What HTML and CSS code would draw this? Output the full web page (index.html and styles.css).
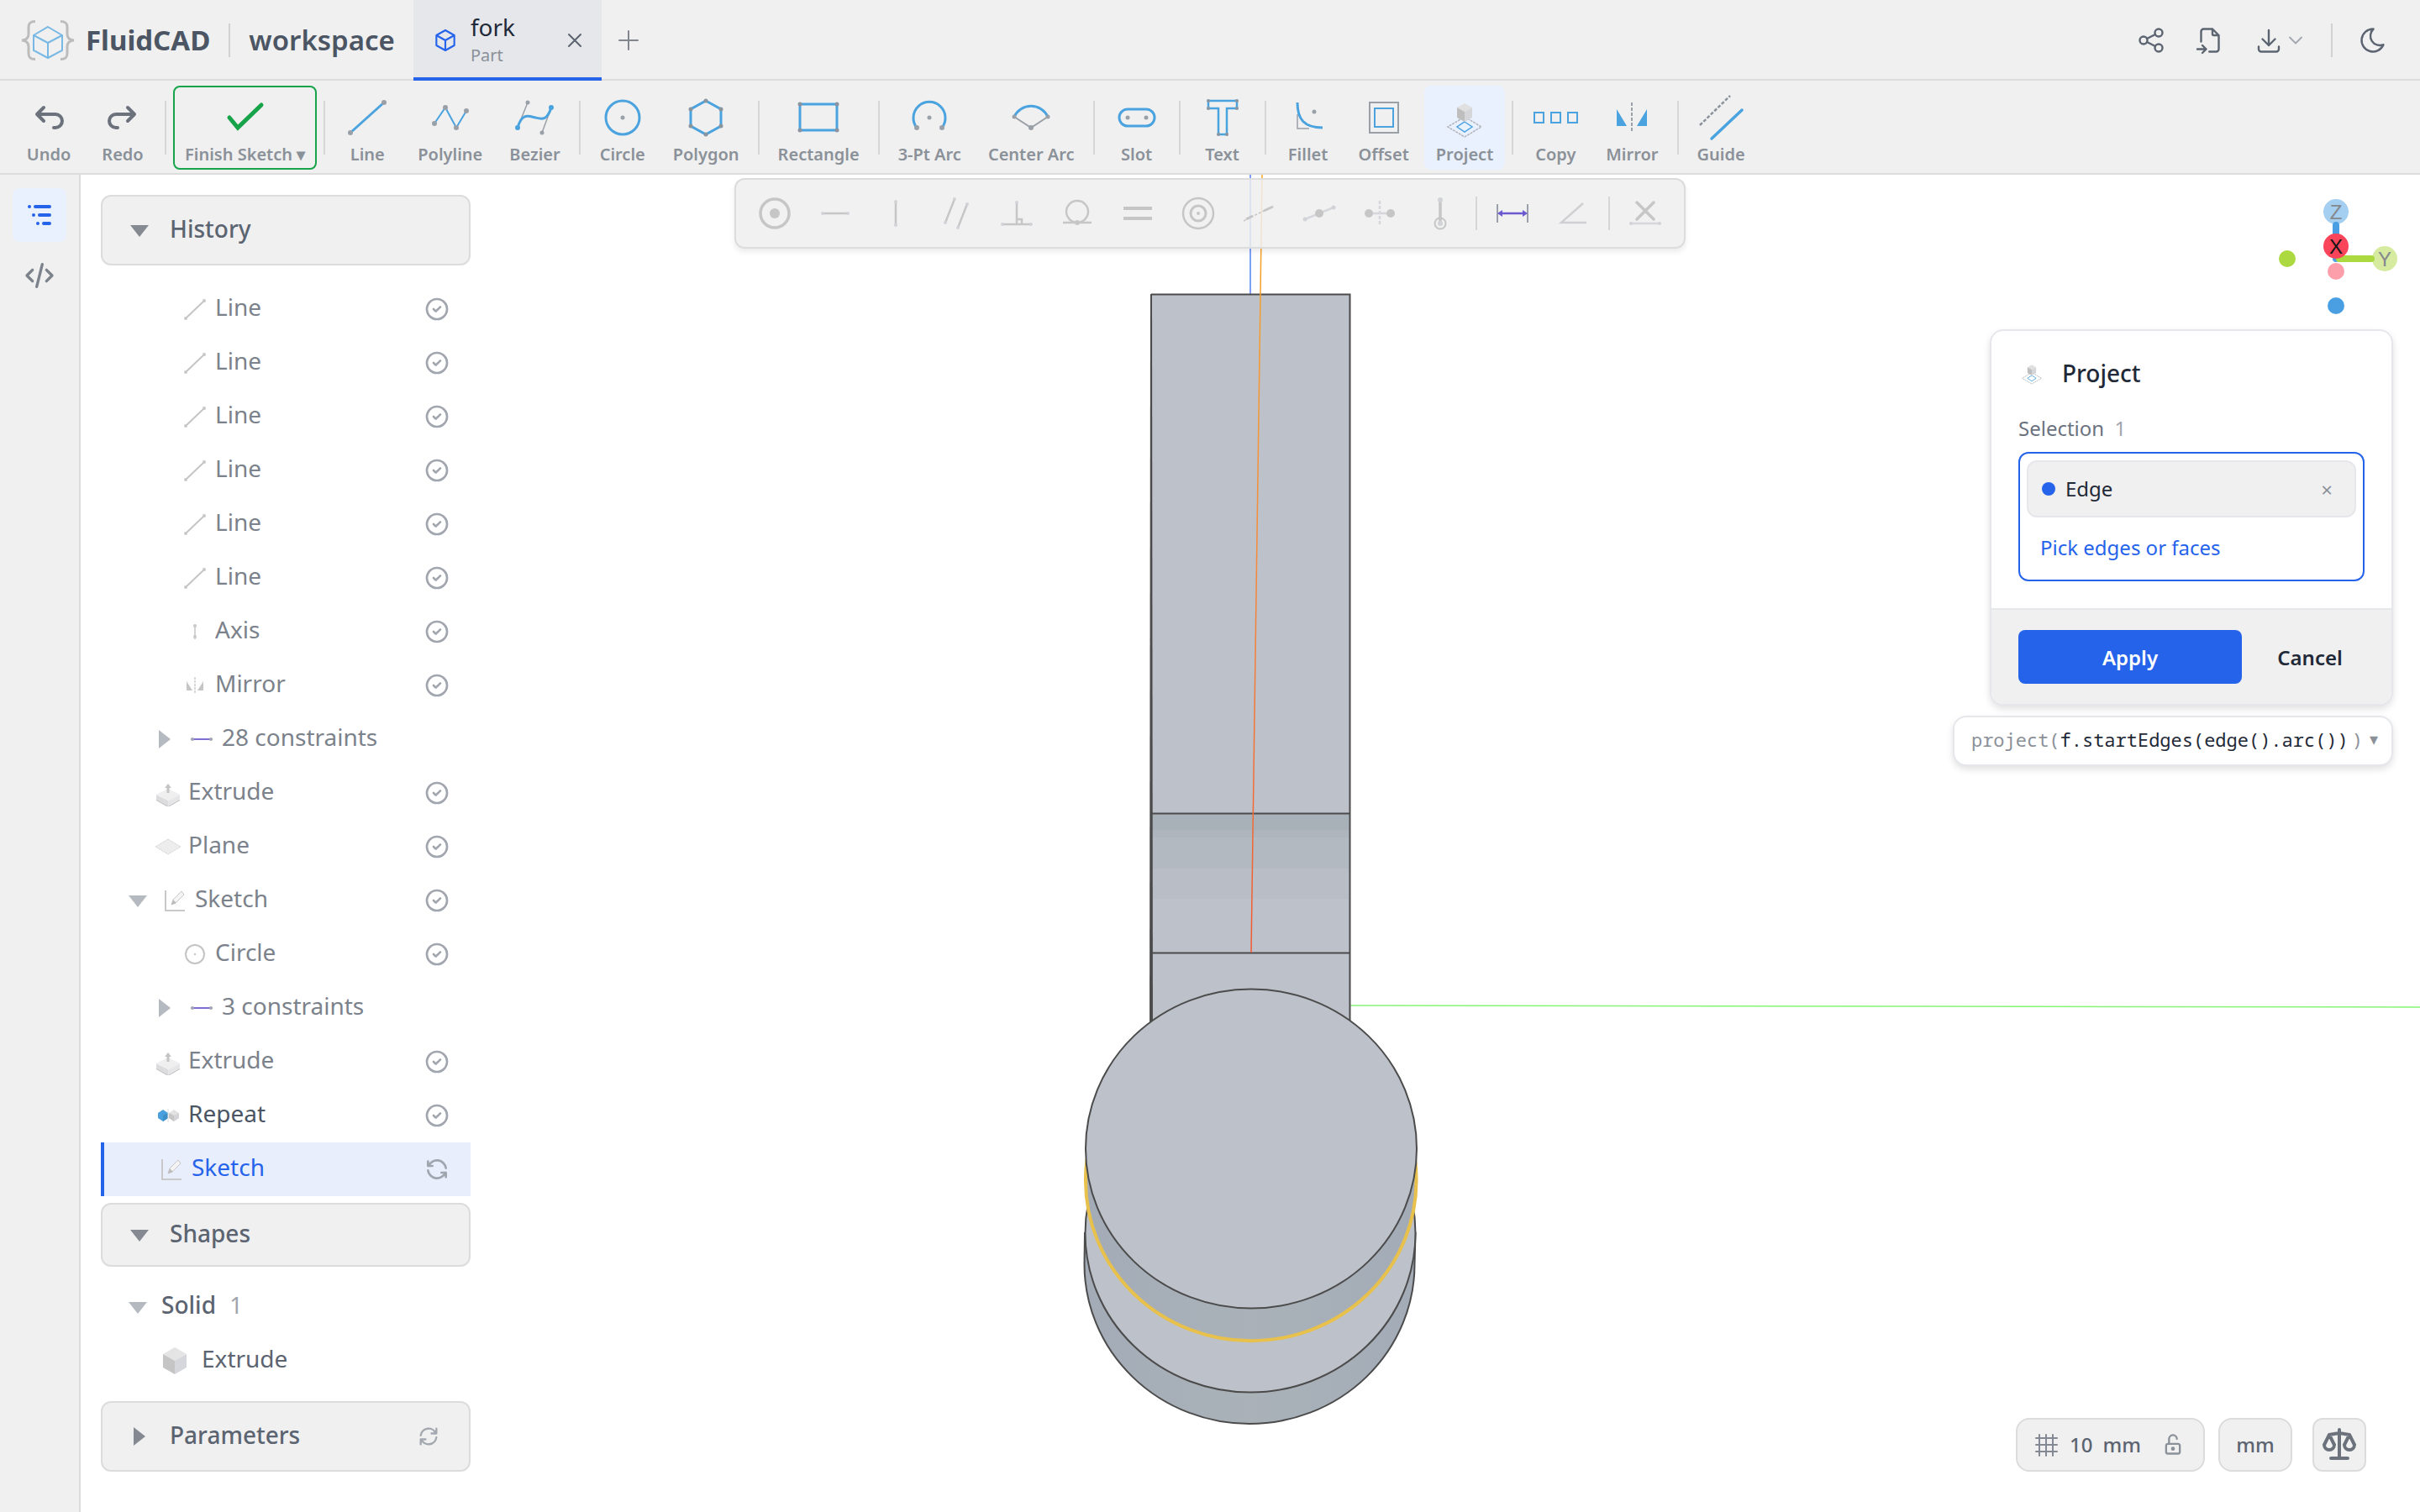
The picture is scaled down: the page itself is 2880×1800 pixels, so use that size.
FILE: index.html
```html
<!DOCTYPE html>
<html lang="en">
<head>
<meta charset="utf-8">
<title>FluidCAD – fork</title>
<link rel="stylesheet" href="styles.css">
</head>
<body>
<svg class="defs" aria-hidden="true">
  <symbol id="i-cube" viewBox="0 0 24 24"><path d="M12 3l8 4.5v9l-8 4.5-8-4.5v-9zM12 12l8-4.5M12 12v9M12 12L4 7.5"/></symbol>
  <symbol id="i-check" viewBox="0 0 24 24"><circle cx="12" cy="12" r="9"/><path d="M9 12l2 2 4-4"/></symbol>
  <symbol id="i-sync" viewBox="0 0 24 24"><path d="M20 11a8.1 8.1 0 0 0-15.5-2m-.5-4v4h4M4 13a8.1 8.1 0 0 0 15.5 2m.5 4v-4h-4"/></symbol>
  <symbol id="r-line" viewBox="0 0 32 32"><path d="M5 27L27 6" stroke="#c4c4c4" stroke-width="2"/><circle cx="5" cy="27" r="2" fill="#c8c8c8"/><circle cx="27" cy="6" r="2" fill="#c8c8c8"/></symbol>
  <symbol id="r-axis" viewBox="0 0 32 32"><path d="M16 7v18" stroke="#d4d4d8" stroke-width="2"/><circle cx="16" cy="9" r="2" fill="#c8c8c8"/><circle cx="16" cy="22" r="2" fill="#c8c8c8"/></symbol>
  <symbol id="r-mirror" viewBox="0 0 32 32"><path d="M6 11v11h7zM26 11v11h-7z" fill="#c6c6c6"/><path d="M16 6v20" stroke="#d8d8d8" stroke-width="2" stroke-dasharray="3 1"/></symbol>
  <symbol id="r-con" viewBox="0 0 32 32"><path d="M5 16h22" stroke="#7b6ed6" stroke-width="2"/><circle cx="5" cy="16" r="2" fill="#a0a4ae"/><circle cx="27" cy="16" r="2" fill="#a0a4ae"/></symbol>
  <symbol id="r-extrude" viewBox="0 0 32 32"><path d="M2 23l14 8 14-8v2l-14 8-14-8z" fill="#bdbdbd"/><path d="M2 18l14 7v7L2 24z" fill="#dcdcde"/><path d="M30 18l-14 7v7l14-8z" fill="#e6e6e8"/><path d="M16 11l14 7-14 7-14-7z" fill="#efefef"/><path d="M16 16v-8" stroke="#c4c4c4" stroke-width="3"/><path d="M16 5l4 5h-8z" fill="#c4c4c4"/></symbol>
  <symbol id="r-plane" viewBox="0 0 32 32"><path d="M1 16l15-9 15 9-15 9z" fill="#ededed" stroke="#d2d2d2" stroke-dasharray="2 1"/></symbol>
  <symbol id="r-sketch" viewBox="0 0 32 32"><path d="M5 4v24h23" fill="none" stroke="#c9c9cc" stroke-width="2"/><path d="M12 21l2-6 10-10 3 4-10 10z" fill="#f4f4f4" stroke="#c6c6c6"/><path d="M12 21l2-6 4 4z" fill="#bdbdbd"/></symbol>
  <symbol id="r-circle" viewBox="0 0 32 32"><circle cx="16" cy="16" r="11" fill="none" stroke="#c4c4c4" stroke-width="2"/><circle cx="16" cy="16" r="1" fill="#b0b0b0"/></symbol>
  <symbol id="r-repeat" viewBox="0 0 32 32"><path d="M4 13l6-4 6 4v6l-6 4-6-4z" fill="#4aa0dc"/><path d="M10 16l6-3v6l-6 4z" fill="#3d8fc8"/><path d="M17 13l6-4 6 4v6l-6 4-6-4z" fill="#e2e2e2"/><path d="M17 13l6 3v7l-6-4z" fill="#c6c6c6"/><path d="M23 16l6-3v6l-6 4z" fill="#d4d5d9"/><path d="M16 8v16" stroke="#dcdcdc"/></symbol>
  <symbol id="r-solid" viewBox="0 0 32 32"><path d="M16 0l14 8-14 8L2 8z" fill="#e4e4e4"/><path d="M2 8l14 8v16L2 24z" fill="#c5c5c5"/><path d="M30 8l-14 8v16l14-8z" fill="#d5d7dc"/></symbol>
  <symbol id="i-project" viewBox="0 0 56 56"><path d="M28 27l20 12-20 12L8 39z" fill="none" stroke="#b0b4ba" stroke-width="1.500" stroke-dasharray="3 1"/><path d="M28 33l9 6-9 6-9-6z" fill="none" stroke="#4aa3df" stroke-width="1.500"/><path d="M28 11l9 5-9 5-9-5z" fill="#e0e0e0"/><path d="M19 16l9 5v12l-9-5z" fill="#bebebe"/><path d="M37 16l-9 5v12l9-5z" fill="#d5d6d9"/></symbol>
</svg>

<header class="topbar">
  <a class="brand" href="#">
    <svg class="logo" viewBox="0 0 66 48" fill="none"><path d="M18 1.500c-6 0-8 2-8 7v8c0 4-2 7-8 7.500 6 .5 8 3.500 8 7.500v8c0 5 2 7 8 7M48 1.500c6 0 8 2 8 7v8c0 4 2 7 8 7.500-6 .5-8 3.500-8 7.500v8c0 5-2 7-8 7" stroke="#bcbcbc" stroke-width="3"/><path d="M33 8l17 10v18L33 45 16 36V18zM33 27l17-9M33 27v18M33 27L16 18" stroke="#77b8e4" stroke-width="2"/></svg>
    <span>FluidCAD</span>
  </a>
  <span class="rule"></span>
  <span class="workspace">workspace</span>
  <div class="tab">
    <svg class="ic32 stroke" viewBox="0 0 24 24"><use href="#i-cube"/></svg>
    <span class="tab-text"><span class="tab-name">fork</span><span class="tab-kind">Part</span></span>
    <button class="icon-btn" aria-label="Close tab"><svg class="ic24 stroke" viewBox="0 0 24 24"><path d="M5 5l14 14M19 5L5 19"/></svg></button>
  </div>
  <button class="icon-btn add" aria-label="New tab"><svg class="ic24 stroke" viewBox="0 0 24 24"><path d="M12 1v22M1 12h22"/></svg></button>
  <nav class="actions">
    <button class="icon-btn share" aria-label="Share"><svg class="ic36 stroke" viewBox="0 0 24 24"><circle cx="6" cy="12" r="3"/><circle cx="18" cy="6" r="3"/><circle cx="18" cy="18" r="3"/><path d="M8.700 10.700l6.600-3.400M8.700 13.300l6.600 3.400"/></svg></button>
    <button class="icon-btn import" aria-label="Import"><svg class="ic36 stroke" viewBox="0 0 24 24"><path d="M14 3v4a1 1 0 0 0 1 1h4M5 13V5a2 2 0 0 1 2-2h7l5 5v11a2 2 0 0 1-2 2h-5.500M2 19h7m-3-3l3 3-3 3"/></svg></button>
    <button class="icon-btn" aria-label="Export"><svg class="ic36 stroke" viewBox="0 0 24 24"><path d="M4 17v2a2 2 0 0 0 2 2h12a2 2 0 0 0 2-2v-2M7 11l5 5 5-5M12 4v12"/></svg><svg class="ic28 stroke faint" viewBox="0 0 24 24"><path d="M6 9l6 6 6-6"/></svg></button>
    <span class="rule"></span>
    <button class="icon-btn" aria-label="Dark theme"><svg class="ic36 stroke" viewBox="0 0 24 24"><path d="M12 3h.393a7.500 7.500 0 0 0 7.920 12.446A9 9 0 1 1 12 2.992z"/></svg></button>
  </nav>
</header>

<div class="toolbar" role="toolbar" aria-label="Sketch tools">
  <button class="tool"><svg class="ic48 stroke" viewBox="0 0 24 24"><path d="M9 14l-4-4 4-4M5 10h11a4 4 0 1 1 0 8h-1"/></svg>Undo</button>
  <button class="tool"><svg class="ic48 stroke" viewBox="0 0 24 24"><path d="M15 14l4-4-4-4M19 10H8a4 4 0 1 0 0 8h1"/></svg>Redo</button>
  <span class="sep"></span>
  <button class="tool finish"><svg viewBox="0 0 56 56"><path d="M9 28l10 12L47 13" stroke="#16a34a" stroke-width="5" stroke-linecap="round"/></svg>Finish Sketch ▾</button>
  <span class="sep"></span>
  <button class="tool"><svg viewBox="0 0 56 56"><path d="M8 46L48 10" stroke="#4aa3df" stroke-width="3"/><g fill="#9aa0a8"><circle cx="8" cy="46" r="3"/><circle cx="48" cy="10" r="3"/></g></svg>Line</button>
  <button class="tool"><svg viewBox="0 0 56 56"><path d="M9 35l13-19 13 24 12-20" stroke="#4aa3df" stroke-width="2"/><g fill="#9aa0a8"><circle cx="9" cy="35" r="3"/><circle cx="22" cy="16" r="3"/><circle cx="35" cy="40" r="3"/><circle cx="47" cy="20" r="3"/></g></svg>Polyline</button>
  <button class="tool"><svg viewBox="0 0 56 56"><path d="M19 10L7 40M36 46l11-30" stroke="#9aa0a8" stroke-width="1.500"/><path d="M7 40C12 22 20 26 28 28s14 4 19-12" stroke="#4aa3df" stroke-width="3"/><g fill="#9aa0a8"><circle cx="19" cy="10" r="2.500"/><circle cx="36" cy="46" r="2.500"/></g><g fill="#4aa3df"><circle cx="7" cy="40" r="3"/><circle cx="47" cy="16" r="3"/></g></svg>Bezier</button>
  <span class="sep"></span>
  <button class="tool"><svg viewBox="0 0 56 56"><circle cx="28" cy="28" r="20" stroke="#4aa3df" stroke-width="3"/><circle cx="28" cy="28" r="2.500" fill="#9aa0a8"/></svg>Circle</button>
  <button class="tool"><svg viewBox="0 0 56 56"><path d="M28 8l18 10v20L28 48 10 38V18z" stroke="#4aa3df" stroke-width="3"/><g fill="#8b95a0"><circle cx="28" cy="8" r="2.500"/><circle cx="46" cy="18" r="2.500"/><circle cx="46" cy="38" r="2.500"/><circle cx="28" cy="48" r="2.500"/><circle cx="10" cy="38" r="2.500"/><circle cx="10" cy="18" r="2.500"/></g></svg>Polygon</button>
  <span class="sep"></span>
  <button class="tool"><svg viewBox="0 0 56 56"><path d="M6 12h44v31H6z" stroke="#4aa3df" stroke-width="3"/><g fill="#8b95a0"><circle cx="6" cy="12" r="2.500"/><circle cx="50" cy="12" r="2.500"/><circle cx="6" cy="43" r="2.500"/><circle cx="50" cy="43" r="2.500"/></g></svg>Rectangle</button>
  <span class="sep"></span>
  <button class="tool"><svg viewBox="0 0 56 56"><path d="M13 40a19 19 0 1 1 30 0" stroke="#4aa3df" stroke-width="3"/><g fill="#9aa0a8"><circle cx="28" cy="28" r="2.500"/><circle cx="13" cy="40" r="3"/><circle cx="43" cy="40" r="3"/></g></svg>3-Pt Arc</button>
  <button class="tool"><svg viewBox="0 0 56 56"><path d="M8 27l20 13 20-13" stroke="#9aa0a8" stroke-width="2"/><path d="M8 27a22 22 0 0 1 40 0" stroke="#4aa3df" stroke-width="3"/><g fill="#9aa0a8"><circle cx="8" cy="27" r="2.500"/><circle cx="48" cy="27" r="2.500"/><circle cx="28" cy="40" r="3"/></g></svg>Center Arc</button>
  <span class="sep"></span>
  <button class="tool"><svg viewBox="0 0 56 56"><rect x="7" y="18" width="42" height="20" rx="10" stroke="#4aa3df" stroke-width="3"/><g fill="#9aa0a8"><circle cx="17" cy="28" r="2.500"/><circle cx="39" cy="28" r="2.500"/></g></svg>Slot</button>
  <span class="sep"></span>
  <button class="tool"><svg viewBox="0 0 56 56"><path d="M11 8h34v9H33v31H23V17H11z" stroke="#4aa3df" stroke-width="2.500"/><g fill="#8b95a0"><circle cx="11" cy="8" r="2"/><circle cx="45" cy="8" r="2"/><circle cx="11" cy="17" r="2"/><circle cx="45" cy="17" r="2"/><circle cx="23" cy="48" r="2"/><circle cx="33" cy="48" r="2"/></g></svg>Text</button>
  <span class="sep"></span>
  <button class="tool"><svg viewBox="0 0 56 56"><path d="M15 24v17h14" stroke="#9aa0a8" stroke-width="1.500"/><path d="M15 10c0 20 8 30 30 30" stroke="#4aa3df" stroke-width="3"/><circle cx="35" cy="21" r="2.500" fill="#9aa0a8"/></svg>Fillet</button>
  <button class="tool"><svg viewBox="0 0 56 56"><rect x="11" y="10" width="34" height="36" stroke="#9aa0a8" stroke-width="2"/><rect x="17" y="17" width="22" height="22" stroke="#4aa3df" stroke-width="2"/></svg>Offset</button>
  <button class="tool active"><svg viewBox="0 0 56 56"><use href="#i-project"/></svg>Project</button>
  <span class="sep"></span>
  <button class="tool"><svg viewBox="0 0 56 56"><path d="M3 22h11v12H3zM23 22h11v12H23zM43 22h11v12H43z" stroke="#4aa3df" stroke-width="2"/></svg>Copy</button>
  <button class="tool"><svg viewBox="0 0 56 56"><path d="M10 18v20h12zM46 18v20H34z" fill="#4aa3df"/><path d="M28 10v36" stroke="#9aa0a8" stroke-width="2" stroke-dasharray="4 2"/></svg>Mirror</button>
  <span class="sep"></span>
  <button class="tool"><svg viewBox="0 0 56 56"><path d="M3 37L39 2" stroke="#8b929c" stroke-width="2.500" stroke-dasharray="4 2"/><path d="M17 53l36-34" stroke="#4aa3df" stroke-width="3.500" stroke-linecap="round"/></svg>Guide</button>
</div>

<main class="body">
  <nav class="rail">
    <button class="rail-btn on" aria-label="Tree"><svg class="ic40" viewBox="0 0 40 40" stroke="#2563eb" stroke-width="4" stroke-linecap="round"><path d="M8 10h0M15 10h17M13 20h0M20 20h12M18 30h0M25 30h7"/></svg></button>
    <button class="rail-btn" aria-label="Code"><svg class="ic40 stroke" viewBox="0 0 24 24"><path d="M7 8l-4 4 4 4M17 8l4 4-4 4M14 4l-4 16"/></svg></button>
  </nav>

  <section class="viewport">
    <svg class="scene" viewBox="96 208 2784 1592" preserveAspectRatio="xMidYMid slice">
      <defs>
        <linearGradient id="side"><stop offset="0" stop-color="#a3abb7"/><stop offset=".3" stop-color="#a7afb8"/><stop offset=".5" stop-color="#aab2b8"/><stop offset=".7" stop-color="#a7afb8"/><stop offset="1" stop-color="#a3abb7"/></linearGradient>
        <linearGradient id="axis" gradientUnits="userSpaceOnUse" x1="0" y1="208" x2="0" y2="1134"><stop offset="0" stop-color="#f5a623"/><stop offset=".5" stop-color="#f58a3c"/><stop offset="1" stop-color="#f2582f"/></linearGradient>
      </defs>
      <path d="M1488 208v142" stroke="#7c9ff8" stroke-width="2"/>
      <path d="M1607 1197l1273 2" stroke="#86f575" stroke-width="1.500"/>
      <path d="M1370 350h236v900h-236z" fill="#bcc1ca"/>
      <path d="M1370 969h236v28h-236z" fill="#a9b1b8"/>
      <path d="M1370 988h236v9h-236z" fill="#aeb5bc"/>
      <path d="M1370 997h236v37h-236z" fill="#b2b9c0"/>
      <path d="M1370 1034h236v36h-236z" fill="#b8bdc6"/>
      <path d="M1369 350h2l1 900h-4z" fill="#4b4b4b"/>
      <path d="M1370 350.500h236.500V1230M1370 968.500h236M1370 1134.500h236" fill="none" stroke="#4b4b4b" stroke-width="2"/>
      <path d="M1502 208L1489 1134" stroke="url(#axis)" stroke-width="1.500"/>
      <g stroke="#4b4b4b" stroke-width="2">
        <path d="M1291 1468l-.5 37a196.500 190 0 0 0 393 0l1-37z" fill="url(#side)"/>
        <ellipse cx="1488" cy="1468" rx="196.500" ry="189.500" fill="#bcc1ca"/>
        <path d="M1292 1367v39h393.500v-39z" fill="url(#side)" stroke="none"/>
        <path d="M1292 1406a196.500 190 0 0 0 393 0" fill="url(#side)" stroke="none"/>
        <path d="M1293.500 1380a196.500 190 0 0 0-1.500 26a196.500 190 0 0 0 393.500 0a196.500 190 0 0 0-1.500-26" fill="none" stroke="#e8c04c" stroke-width="4"/>
        <ellipse cx="1489" cy="1367.500" rx="197" ry="190" fill="#bcc1ca"/>
      </g>
      <g font-family="Liberation Sans, sans-serif" font-size="24" text-anchor="middle">
        <circle cx="2722" cy="308" r="10" fill="#acd840"/>
        <circle cx="2780" cy="323" r="10" fill="#fd9fab"/>
        <circle cx="2780" cy="364" r="10" fill="#4a9fe2"/>
        <circle cx="2780" cy="252" r="15" fill="#a4cff0"/><text x="2780" y="261" fill="#85898e">Z</text>
        <circle cx="2838" cy="308" r="15" fill="#d6eba0"/><text x="2838" y="317" fill="#85898e">Y</text>
        <path d="M2780 268v40" stroke="#4a9fe2" stroke-width="8" stroke-linecap="round"/>
        <path d="M2784 308h38" stroke="#acd840" stroke-width="8" stroke-linecap="round"/>
        <circle cx="2780" cy="293" r="15" fill="#fa4459"/><text x="2780" y="302" fill="#141414">X</text>
      </g>
    </svg>

    <aside class="side">
      <div class="card"><i class="tri down"></i><h2>History</h2><svg class="kebab" viewBox="0 0 28 28" fill="#8b9199"><circle cx="14" cy="6" r="2.500"/><circle cx="14" cy="14" r="2.500"/><circle cx="14" cy="22" r="2.500"/></svg></div>
      <ul class="tree">
        <li class="d2"><svg><use href="#r-line"/></svg><span>Line</span><svg class="state"><use href="#i-check"/></svg></li>
        <li class="d2"><svg><use href="#r-line"/></svg><span>Line</span><svg class="state"><use href="#i-check"/></svg></li>
        <li class="d2"><svg><use href="#r-line"/></svg><span>Line</span><svg class="state"><use href="#i-check"/></svg></li>
        <li class="d2"><svg><use href="#r-line"/></svg><span>Line</span><svg class="state"><use href="#i-check"/></svg></li>
        <li class="d2"><svg><use href="#r-line"/></svg><span>Line</span><svg class="state"><use href="#i-check"/></svg></li>
        <li class="d2"><svg><use href="#r-line"/></svg><span>Line</span><svg class="state"><use href="#i-check"/></svg></li>
        <li class="d2"><svg><use href="#r-axis"/></svg><span>Axis</span><svg class="state"><use href="#i-check"/></svg></li>
        <li class="d2"><svg><use href="#r-mirror"/></svg><span>Mirror</span><svg class="state"><use href="#i-check"/></svg></li>
        <li class="g2"><i class="tri closed"></i><svg><use href="#r-con"/></svg><span>28 constraints</span></li>
        <li class="d1"><svg><use href="#r-extrude"/></svg><span>Extrude</span><svg class="state"><use href="#i-check"/></svg></li>
        <li class="d1"><svg><use href="#r-plane"/></svg><span>Plane</span><svg class="state"><use href="#i-check"/></svg></li>
        <li class="g1"><i class="tri down"></i><svg><use href="#r-sketch"/></svg><span>Sketch</span><svg class="state"><use href="#i-check"/></svg></li>
        <li class="d2"><svg><use href="#r-circle"/></svg><span>Circle</span><svg class="state"><use href="#i-check"/></svg></li>
        <li class="g2"><i class="tri closed"></i><svg><use href="#r-con"/></svg><span>3 constraints</span></li>
        <li class="d1"><svg><use href="#r-extrude"/></svg><span>Extrude</span><svg class="state"><use href="#i-check"/></svg></li>
        <li class="d1 live"><svg><use href="#r-repeat"/></svg><span>Repeat</span><svg class="state"><use href="#i-check"/></svg></li>
        <li class="d1 current"><svg><use href="#r-sketch"/></svg><span>Sketch</span><svg class="state"><use href="#i-sync"/></svg></li>
      </ul>
      <div class="card slim"><i class="tri down"></i><h2>Shapes</h2></div>
      <ul class="tree shapes">
        <li class="g1 group"><i class="tri down"></i><span>Solid</span><span class="count">1</span></li>
        <li class="solid"><svg><use href="#r-solid"/></svg><span>Extrude</span></li>
      </ul>
      <div class="card"><i class="tri closed"></i><h2>Parameters</h2><svg class="ic28 stroke refresh" viewBox="0 0 24 24"><path d="M4 11a8.100 8.100 0 0 1 15.500-2m.5-5v5h-5M20 13a8.100 8.100 0 0 1-15.500 2m-.5 5v-5h5"/></svg></div>
    </aside>

    <div class="panels">
      <form class="dialog">
        <div class="dialog-main">
          <h3><svg class="ic32" viewBox="0 0 56 56"><use href="#i-project"/></svg>Project</h3>
          <p class="field">Selection <span>1</span></p>
          <div class="picker">
            <div class="chip"><i class="dot"></i><span>Edge</span><button type="button" aria-label="Remove">×</button></div>
            <p>Pick edges or faces</p>
          </div>
        </div>
        <footer><button type="button" class="apply">Apply</button><button type="button" class="cancel">Cancel</button></footer>
      </form>
      <button class="code"><span>project(<b>f.startEdges(edge().arc())</b></span><span class="close">)</span><span class="caret">▾</span></button>
    </div>

    <div class="status">
      <div class="pill"><svg class="ic28" viewBox="0 0 28 28" stroke="#838a93" stroke-width="2" stroke-linecap="round"><path d="M6 2v25M14 2v25M22 2v25M2 6h25M2 14h25M2 22h25"/></svg><span>10</span><span class="unit">mm</span><svg class="ic28 stroke lock" viewBox="0 0 24 24"><rect x="5" y="11" width="14" height="10" rx="2"/><circle cx="12" cy="16" r="1"/><path d="M8 11V6a4 4 0 0 1 8 0"/></svg></div>
      <button class="pill units">mm</button>
      <button class="pill scale" aria-label="Measure"><svg class="ic48 stroke" viewBox="0 0 24 24"><path d="M7 20h10M6 6l6-1 6 1M12 3v17M9 12L6 6l-3 6a3 3 0 0 0 6 0M21 12l-3-6-3 6a3 3 0 0 0 6 0"/></svg></button>
    </div>
  </section>

  <div class="constraints" role="toolbar" aria-label="Constraints">
    <button><svg viewBox="-22 -22 44 44"><circle r="17" stroke-width="3.500"/><circle r="6" class="f"/></svg></button>
    <button><svg viewBox="-22 -22 44 44"><path d="M-15 0h30"/><g class="e"><circle cx="-15" r="2"/><circle cx="15" r="2"/></g></svg></button>
    <button><svg viewBox="-22 -22 44 44"><path d="M0-14v28"/><g class="e"><circle cy="-14" r="2"/><circle cy="14" r="2"/></g></svg></button>
    <button><svg viewBox="-22 -22 44 44"><path d="M-13 11L-2-17M2 17l11-28"/><g class="e"><circle cx="-13" cy="11" r="2"/><circle cx="-2" cy="-17" r="2"/><circle cx="2" cy="17" r="2"/><circle cx="13" cy="-11" r="2"/></g></svg></button>
    <button><svg viewBox="-22 -22 44 44"><path d="M-17 13h34M0-13v26M0 7h6v6"/><g class="e"><circle cx="-17" cy="13" r="2"/><circle cx="17" cy="13" r="2"/><circle cy="-13" r="2"/></g></svg></button>
    <button><svg viewBox="-22 -22 44 44"><circle cy="-2" r="13"/><path d="M-17 11h34"/><circle cy="11" r="3" class="f"/></svg></button>
    <button><svg viewBox="-22 -22 44 44"><path d="M-17-6h34M-17 6h34" stroke-width="4"/></svg></button>
    <button><svg viewBox="-22 -22 44 44"><circle r="18"/><circle r="9" stroke-width="3"/><circle r="2" class="f"/></svg></button>
    <button><svg viewBox="-22 -22 44 44"><path d="M-15 7l8-4M6-3l11-5" stroke-width="3"/><path d="M-18 9L18-9" stroke-width="1.500" stroke-dasharray="3 2"/></svg></button>
    <button><svg viewBox="-22 -22 44 44"><path d="M-17 7L17-7" stroke="#d6d7dc"/><circle r="5" class="f"/><g class="e"><circle cx="-17" cy="7" r="2.500"/><circle cx="17" cy="-7" r="2.500"/></g></svg></button>
    <button><svg viewBox="-22 -22 44 44"><path d="M-13 0h26" stroke="#d6d7dc"/><path d="M0-15v30" stroke="#d6d7dc" stroke-dasharray="4 2"/><circle cx="-13" r="5" class="f"/><circle cx="13" r="5" class="f"/></svg></button>
    <button><svg viewBox="-22 -22 44 44"><path d="M0-14v24" stroke-width="3.500"/><circle cy="12" r="6.500" stroke-width="2"/><g class="e"><circle cy="-16" r="3"/><circle cy="12" r="3"/></g></svg></button>
    <span class="sep"></span>
    <button><svg viewBox="-22 -22 44 44"><path d="M-18-11v22M18-11v22" stroke="#9aa0ab" stroke-width="2"/><path d="M-14 0h28" stroke="#6a5acd" stroke-width="2.500"/><path d="M-18 0l6-4v8zM18 0l-6-4v8z" fill="#6a5acd" stroke="none"/></svg></button>
    <button><svg viewBox="-22 -22 44 44"><path d="M12-12L-14 11h30" stroke="#d0d0d4"/></svg></button>
    <span class="sep"></span>
    <button><svg viewBox="-22 -22 44 44"><path d="M-10-13L10 7M10-13L-10 7" stroke-width="3.500" stroke-linecap="round"/><path d="M-17 12h34" stroke="#d6d7dc"/><g class="e"><circle cx="-17" cy="12" r="2"/><circle cx="17" cy="12" r="2"/></g></svg></button>
  </div>
</main>
</body>
</html>
```
FILE: styles.css
```css
* { box-sizing: border-box; }
body {
  margin: 0;
  height: 100vh;
  display: flex;
  flex-direction: column;
  background: #fff;
  color: #4b5563;
  font-family: "Noto Sans", sans-serif;
  font-size: 28px;
  overflow: hidden;
}
h2, h3, p, ul { margin: 0; padding: 0; font-weight: 500; }
button { font: inherit; color: inherit; background: none; border: 0; padding: 0; }
svg { display: block; flex: none; fill: none; }
.defs { width: 0; height: 0; position: absolute; }
.stroke { stroke: currentColor; stroke-width: 2; stroke-linecap: round; stroke-linejoin: round; }
.ic24 { width: 24px; height: 24px; }
.ic28 { width: 28px; height: 28px; }
.ic32 { width: 32px; height: 32px; }
.ic36 { width: 36px; height: 36px; }
.ic40 { width: 40px; height: 40px; }
.ic48 { width: 48px; height: 48px; }

/* top bar */
.topbar {
  flex: none;
  height: 96px;
  display: flex;
  align-items: center;
  padding: 0 38px 0 24px;
  background: #f0f0f0;
  box-shadow: inset 0 -2px #dcdcdc;
  color: #5b6470;
}
.brand {
  display: flex;
  align-items: center;
  gap: 12px;
  color: #4b5563;
  font-size: 33px;
  font-weight: 700;
  text-decoration: none;
}
.brand span, .workspace { padding-bottom: 2px; }
.logo { width: 66px; height: 48px; }
.rule { width: 2px; height: 40px; background: #d2d2d4; }
.brand + .rule { margin: 0 22px; }
.workspace { color: #4b5563; font-size: 33px; font-weight: 600; margin-right: 22px; }
.tab {
  width: 224px;
  height: 96px;
  display: flex;
  align-items: center;
  padding: 0 20px 0 22px;
  background: #e5e7eb;
  border-bottom: 4px solid #2563eb;
}
.tab > svg { color: #2563eb; margin-right: 14px; margin-top: 4px; stroke-width: 1.600; }
.tab-text { flex: 1; display: flex; flex-direction: column; gap: 4px; }
.tab-name { color: #1f2937; line-height: 36px; }
.tab-kind { color: #8b9199; font-size: 20px; line-height: 24px; }
.icon-btn { display: flex; align-items: center; color: #5b6470; }
.tab .icon-btn { margin-top: 4px; }
.add { margin-left: 20px; color: #82878e; }
.actions { margin-left: auto; display: flex; align-items: center; gap: 30px; }
.actions svg { stroke-width: 1.600; }
.share, .import { margin-right: 4px; }
.actions .faint { color: #a3a8b0; margin-right: -2px; }

/* tool bar */
.toolbar {
  flex: none;
  height: 112px;
  display: flex;
  align-items: center;
  gap: 4px;
  padding: 0 16px;
  background: #f0f0f0;
  box-shadow: inset 0 -2px #dcdcdc;
}
.tool {
  min-width: 84px;
  height: 100px;
  padding: 8px 14px 4px;
  display: flex;
  flex-direction: column;
  align-items: center;
  justify-content: flex-end;
  border-radius: 8px;
  color: #8b9199;
  font-size: 20px;
  font-weight: 600;
  line-height: 28px;
  white-space: nowrap;
}
.tool svg { width: 56px; height: 56px; margin-bottom: 2px; color: #6b727c; }
.tool svg.ic48 { width: 48px; height: 48px; margin: 4px 4px 6px; }
.tool.finish { border: 2px solid #16a34a; padding: 6px 12px 2px; }
.tool.active { background: #eaf1fe; }
.sep { flex: none; width: 2px; height: 64px; margin: 0 4px; background: #d6d6d8; }

/* body */
.body { flex: 1; min-height: 0; display: flex; position: relative; }
.rail {
  flex: none;
  width: 96px;
  display: flex;
  flex-direction: column;
  align-items: center;
  gap: 8px;
  padding: 16px 0;
  background: #f0f0f0;
  border-right: 2px solid #dcdcdc;
}
.rail-btn { width: 64px; height: 64px; display: flex; align-items: center; justify-content: center; border-radius: 8px; color: #7b828b; }
.rail-btn.on { background: #eaf1fe; }
.viewport { flex: 1; position: relative; display: flex; justify-content: space-between; align-items: flex-start; }
.scene { position: absolute; inset: 0; width: 100%; height: 100%; }

/* tree */
.side { position: relative; width: 464px; padding: 24px 0 0 24px; }
.card {
  height: 84px;
  display: flex;
  align-items: center;
  padding: 0 34px 0 22px;
  background: #f0f0f0;
  border: 2px solid #dcdcdc;
  border-radius: 12px;
}
.card.slim { height: 76px; }
.card h2 { flex: 1; font-size: 28px; line-height: 36px; color: #5b6470; padding-bottom: 4px; margin-left: 14px; }
.kebab { width: 28px; height: 28px; }
.refresh { color: #a3a8b0; }
.tri { flex: none; width: 44px; display: flex; justify-content: center; }
.tri::before { content: ""; border: 0 solid transparent; }
.tri.down::before { border-width: 14px 11px 0; border-top-color: #b5bac1; margin-top: 2px; }
.tri.closed::before { border-width: 11px 0 11px 14px; border-left-color: #b5bac1; }
.card .tri.down::before { border-top-color: #858a92; }
.card .tri.closed::before { border-left-color: #858a92; }
.tree { list-style: none; padding: 20px 0 8px; }
.tree li { height: 64px; display: flex; align-items: center; padding-right: 24px; color: #7b828b; font-weight: 400; }
.tree .tri { margin-right: 6px; }
.tree li > svg { width: 32px; height: 32px; }
.tree li > span { margin-left: 8px; padding-bottom: 6px; line-height: 36px; }
.tree .state { margin-left: auto; stroke: #a0a5ae; stroke-width: 2; stroke-linecap: round; stroke-linejoin: round; }
.tree .d1 { padding-left: 64px; }
.tree .d2 { padding-left: 96px; }
.tree .g1 { padding-left: 22px; }
.tree .g2 { padding-left: 54px; }
.tree .live { color: #4b5563; }
.tree .current { background: #e8eefc; border-left: 4px solid #2563eb; color: #2563eb; }
.tree.shapes { padding: 16px 0; }
.tree.shapes li { color: #5b6470; }
.tree.shapes .group { font-weight: 500; }
.tree.shapes .group .tri { margin-right: -2px; }
.tree.shapes .count { margin-left: 16px; color: #a0a5ae; font-weight: 400; }
.tree.shapes .solid { padding-left: 72px; }
.tree.shapes .solid span { margin-left: 16px; }

/* constraint bar */
.constraints {
  position: absolute;
  top: 4px;
  left: 50%;
  transform: translateX(-50%);
  height: 84px;
  display: flex;
  align-items: center;
  gap: 4px;
  padding: 0 12px;
  border: 2px solid #dcdcdc;
  border-radius: 12px;
  background: rgba(238, 238, 238, .85);
  box-shadow: 0 4px 6px rgba(0, 0, 0, .08);
}
.constraints button { width: 68px; height: 56px; display: flex; align-items: center; justify-content: center; }
.constraints svg { width: 44px; height: 44px; stroke: #c6c6c6; stroke-width: 2.500; }
.constraints .sep { height: 40px; }
.constraints .f { fill: #c6c6c6; stroke: none; }
.constraints .e { fill: #d2d3d8; stroke: none; }

/* project dialog */
.panels { position: relative; margin: 184px 32px 0 0; display: flex; flex-direction: column; align-items: flex-end; gap: 12px; }
.dialog {
  width: 480px;
  background: #fff;
  border: 2px solid #e5e7eb;
  border-radius: 16px;
  overflow: hidden;
  box-shadow: 0 4px 8px rgba(0, 0, 0, .12);
  font-size: 24px;
}
.dialog-main { padding: 32px; }
.dialog h3 { display: flex; align-items: center; gap: 20px; font-size: 28px; line-height: 36px; color: #1f2937; }
.field { margin: 32px 0 12px; line-height: 32px; font-weight: 400; color: #6b7280; }
.field span { margin-left: 6px; color: #a0a5ae; }
.picker { height: 154px; padding: 8px; border: 2px solid #2563eb; border-radius: 12px; }
.chip {
  height: 68px;
  display: flex;
  align-items: center;
  padding: 0 26px 0 16px;
  background: #f0f0f0;
  border: 2px solid #e5e7eb;
  border-radius: 12px;
  color: #1f2937;
}
.chip span { flex: 1; margin-left: 12px; padding-bottom: 2px; }
.chip button { color: #8b9199; }
.dot { width: 16px; height: 16px; border-radius: 50%; background: #2563eb; }
.picker p { margin: 20px 0 0 16px; line-height: 32px; color: #2563eb; font-weight: 400; }
.dialog footer { display: flex; gap: 16px; padding: 24px 32px; background: #f0f0f0; border-top: 2px solid #e5e7eb; }
.apply, .cancel { height: 64px; border-radius: 8px; font-weight: 600; }
.apply { width: 266px; background: #2563eb; color: #fff; }
.cancel { flex: 1; color: #1f2937; }
.code {
  height: 60px;
  display: flex;
  align-items: center;
  padding: 0 16px 4px 20px;
  background: #fff;
  border: 2px solid #e5e7eb;
  border-radius: 16px;
  box-shadow: 0 4px 8px rgba(0, 0, 0, .12);
  color: #8b9199;
  font-family: "Noto Sans Mono", "Liberation Mono", monospace;
  font-size: 22px;
}
.code b { font-weight: 400; color: #1f2937; }
.code .close { margin: 0 8px 0 4px; }
.code .caret { font-family: "DejaVu Sans", sans-serif; font-size: 20px; }

/* status */
.status { position: absolute; right: 64px; bottom: 48px; display: flex; }
.pill {
  height: 64px;
  display: flex;
  align-items: center;
  justify-content: center;
  padding: 0 20px;
  border: 2px solid #dcdcdc;
  border-radius: 16px;
  background: #f0f0f0;
  color: #5b6470;
  font-size: 24px;
  font-weight: 500;
}
.pill span { margin-left: 14px; padding-bottom: 2px; }
.pill .unit { margin-left: 12px; }
.pill .lock { margin: 0 2px 0 24px; color: #8b9199; }
.units { width: 88px; margin-left: 16px; padding: 0 0 2px; }
.scale { width: 64px; margin-left: 24px; padding: 0; border-radius: 12px; }
.scale svg { color: #6b727c; }
```
